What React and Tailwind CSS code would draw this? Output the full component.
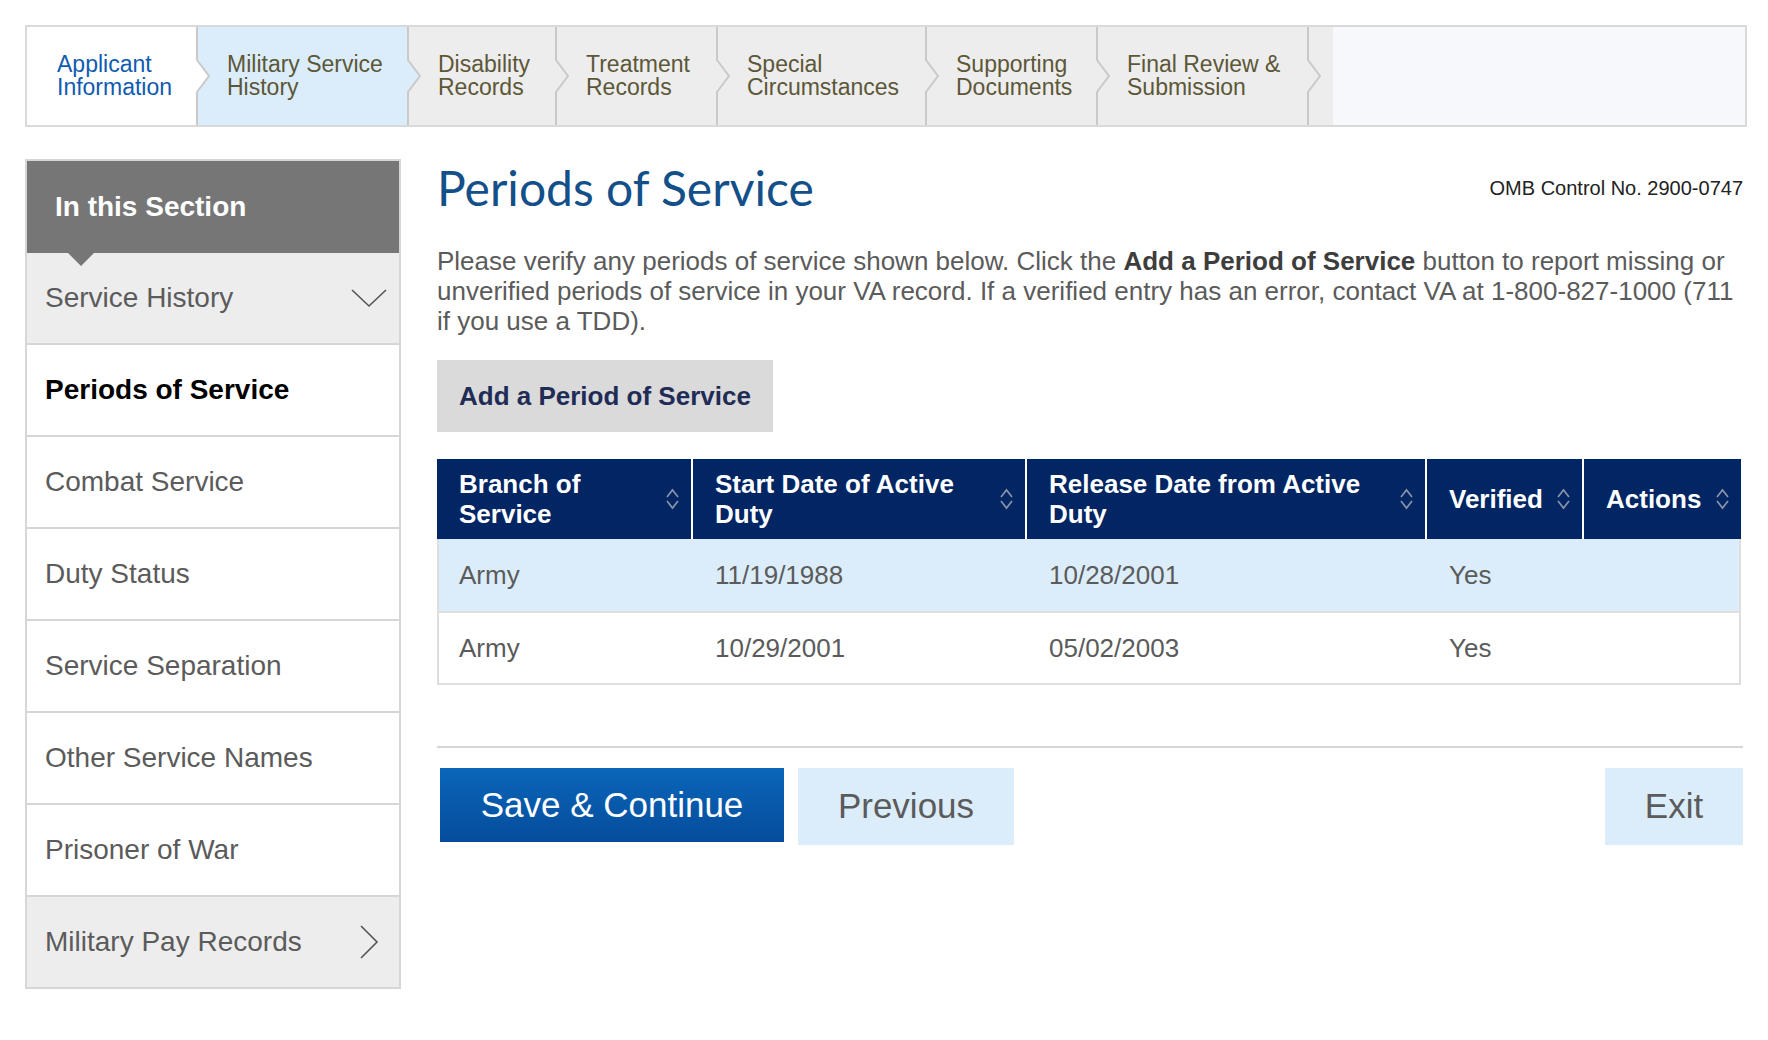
import { useState } from "react";

const steps = [
  { label: ["Applicant", "Information"], w: "w-[170px]", bg: "bg-white", fill: "#ffffff", text: "text-[#0f5bb0]" },
  { label: ["Military Service", "History"], w: "w-[211px]", bg: "bg-[#dbedfa]", fill: "#dbedfa", text: "text-[#5c5738]" },
  { label: ["Disability", "Records"], w: "w-[148px]", bg: "bg-[#ededed]", fill: "#ededed", text: "text-[#5c5738]" },
  { label: ["Treatment", "Records"], w: "w-[161px]", bg: "bg-[#ededed]", fill: "#ededed", text: "text-[#5c5738]" },
  { label: ["Special", "Circumstances"], w: "w-[209px]", bg: "bg-[#ededed]", fill: "#ededed", text: "text-[#5c5738]" },
  { label: ["Supporting", "Documents"], w: "w-[171px]", bg: "bg-[#ededed]", fill: "#ededed", text: "text-[#5c5738]" },
  { label: ["Final Review &", "Submission"], w: "w-[211px]", bg: "bg-[#ededed]", fill: "#ededed", text: "text-[#5c5738]" },
];

const navItems = [
  "Combat Service",
  "Duty Status",
  "Service Separation",
  "Other Service Names",
  "Prisoner of War",
];

const columns = [
  { label: ["Branch of", "Service"], w: "w-[254px]" },
  { label: ["Start Date of Active", "Duty"], w: "w-[332px]" },
  { label: ["Release Date from Active", "Duty"], w: "w-[398px]" },
  { label: ["Verified"], w: "w-[155px]" },
  { label: ["Actions"], w: "flex-1" },
];

const rows = [
  ["Army", "11/19/1988", "10/28/2001", "Yes", ""],
  ["Army", "10/29/2001", "05/02/2003", "Yes", ""],
];

function StepArrow({ fill }) {
  return (
    <svg
      className="absolute top-0 -right-[1px] translate-x-[12px] z-10"
      width="14"
      height="98"
      viewBox="0 0 14 98"
    >
      <polygon points="0,33 2,33 13,49 2,65 0,65" fill={fill} />
      <polyline
        points="1,0 1,33 13,49 1,65 1,98"
        fill="none"
        stroke="#c9c9c9"
        strokeWidth="2"
      />
    </svg>
  );
}

function SortIcon() {
  return (
    <svg width="15" height="26" viewBox="0 0 15 26" className="shrink-0">
      <polyline points="2,11 7.5,4 13,11" fill="none" stroke="#8a93a8" strokeWidth="1.7" />
      <polyline points="2,15 7.5,22 13,15" fill="none" stroke="#8a93a8" strokeWidth="1.7" />
    </svg>
  );
}

export default function App() {
  const [active] = useState(0);

  return (
    <div className="min-h-screen bg-white pl-[25px] pr-[21px] pt-[25px] font-['Liberation_Sans',Arial,sans-serif]">
      {/* step bar */}
      <div className="flex h-[102px] border-2 border-[#d9d9d9]">
        {steps.map((s) => (
          <div key={s.label[0]} className={`relative flex items-center pl-[30px] shrink-0 ${s.w} ${s.bg}`}>
            <div className={`text-[23px] leading-[23px] ${s.text}`}>
              {s.label[0]}
              <br />
              {s.label[1]}
            </div>
            <StepArrow fill={s.fill} />
          </div>
        ))}
        <div className="w-[25px] shrink-0 bg-[#ededed]" />
        <div className="flex-1 bg-[#f6f8fc]" />
      </div>

      <div className="flex gap-[36px] mt-[32px]">
        {/* side nav */}
        <aside className="w-[376px] shrink-0 border-2 border-[#d6d6d6]">
          <div className="relative h-[92px] bg-[#767676] flex items-center pl-[28px]">
            <span className="text-white font-bold text-[28px]">In this Section</span>
            <svg className="absolute left-[40px] -bottom-[13px] z-10" width="28" height="14" viewBox="0 0 28 14">
              <polygon points="0,0 28,0 14,14" fill="#767676" />
            </svg>
          </div>
          <div className="h-[92px] bg-[#ededed] flex items-center justify-between pl-[18px] pr-[12px] border-b-2 border-[#d6d6d6]">
            <span className="text-[28px] text-[#5b5b5b]">Service History</span>
            <svg width="36" height="20" viewBox="0 0 36 20">
              <polyline points="1,2 18,18 35,2" fill="none" stroke="#555" strokeWidth="1.6" />
            </svg>
          </div>
          <div className="h-[92px] bg-white flex items-center pl-[18px] border-b-2 border-[#d6d6d6]">
            <span className="text-[28px] font-bold text-black">Periods of Service</span>
          </div>
          {navItems.map((item) => (
            <div key={item} className="h-[92px] bg-white flex items-center pl-[18px] border-b-2 border-[#d6d6d6]">
              <span className="text-[28px] text-[#5b5b5b]">{item}</span>
            </div>
          ))}
          <div className="h-[90px] bg-[#ededed] flex items-center justify-between pl-[18px] pr-[20px]">
            <span className="text-[28px] text-[#5b5b5b]">Military Pay Records</span>
            <svg width="20" height="34" viewBox="0 0 20 34">
              <polyline points="2,1 18,17 2,33" fill="none" stroke="#555" strokeWidth="1.6" />
            </svg>
          </div>
        </aside>

        {/* main */}
        <main className="flex-1 min-w-0 mr-[4px]">
          <div className="flex items-center justify-between">
            <h1 className="font-['Lato',sans-serif] text-[48px] leading-[58px] text-[#13508a]">
              Periods of Service
            </h1>
            <span className="text-[20px] text-[#222]">OMB Control No. 2900-0747</span>
          </div>

          <p className="mt-[29px] text-[26px] leading-[30px] text-[#5b5b5b]">
            <span className="block whitespace-nowrap">
              Please verify any periods of service shown below. Click the{" "}
              <b className="text-[#3d3d3d]">Add a Period of Service</b> button to report missing or
            </span>
            <span className="block whitespace-nowrap">
              unverified periods of service in your VA record. If a verified entry has an error, contact VA at 1-800-827-1000 (711
            </span>
            <span className="block whitespace-nowrap">if you use a TDD).</span>
          </p>

          <button className="mt-[24px] h-[72px] px-[22px] bg-[#dadada] text-[#1f2c55] font-bold text-[26px]">
            Add a Period of Service
          </button>

          {/* table */}
          <div className="mt-[27px] w-[1304px]">
            <div className="flex h-[80px] bg-white gap-[2px]">
              {columns.map((c) => (
                <div
                  key={c.label[0]}
                  className={`flex items-center justify-between pl-[22px] pr-[11px] bg-[#022563] ${c.w}`}
                >
                  <span className="text-white font-bold text-[26px] leading-[30px]">
                    {c.label[0]}
                    {c.label[1] && <br />}
                    {c.label[1]}
                  </span>
                  <SortIcon />
                </div>
              ))}
            </div>
            <div className="border-x-2 border-b-2 border-[#dedede]">
              {rows.map((r, i) => (
                <div
                  key={i}
                  className={`flex gap-[2px] h-[72px] items-center ${i === active ? "bg-[#dbedfa]" : "bg-white border-t-2 border-[#dedede]"}`}
                >
                  {r.map((cell, j) => (
                    <div key={j} className={`pl-[20px] text-[26px] text-[#5b5b5b] ${columns[j].w}`}>
                      {cell}
                    </div>
                  ))}
                </div>
              ))}
            </div>
          </div>

          <div className="mt-[61px] h-[2px] bg-[#d6d6d6]" />

          <div className="mt-[20px] flex items-start">
            <button className="ml-[3px] w-[344px] h-[74px] bg-gradient-to-b from-[#0a66ba] to-[#064c9b] text-white text-[35px]">
              Save &amp; Continue
            </button>
            <button className="ml-[14px] w-[216px] h-[77px] bg-[#dbedfa] text-[#5b5b5b] text-[35px]">
              Previous
            </button>
            <button className="ml-auto w-[138px] h-[77px] bg-[#dbedfa] text-[#5b5b5b] text-[35px]">
              Exit
            </button>
          </div>
        </main>
      </div>
    </div>
  );
}
